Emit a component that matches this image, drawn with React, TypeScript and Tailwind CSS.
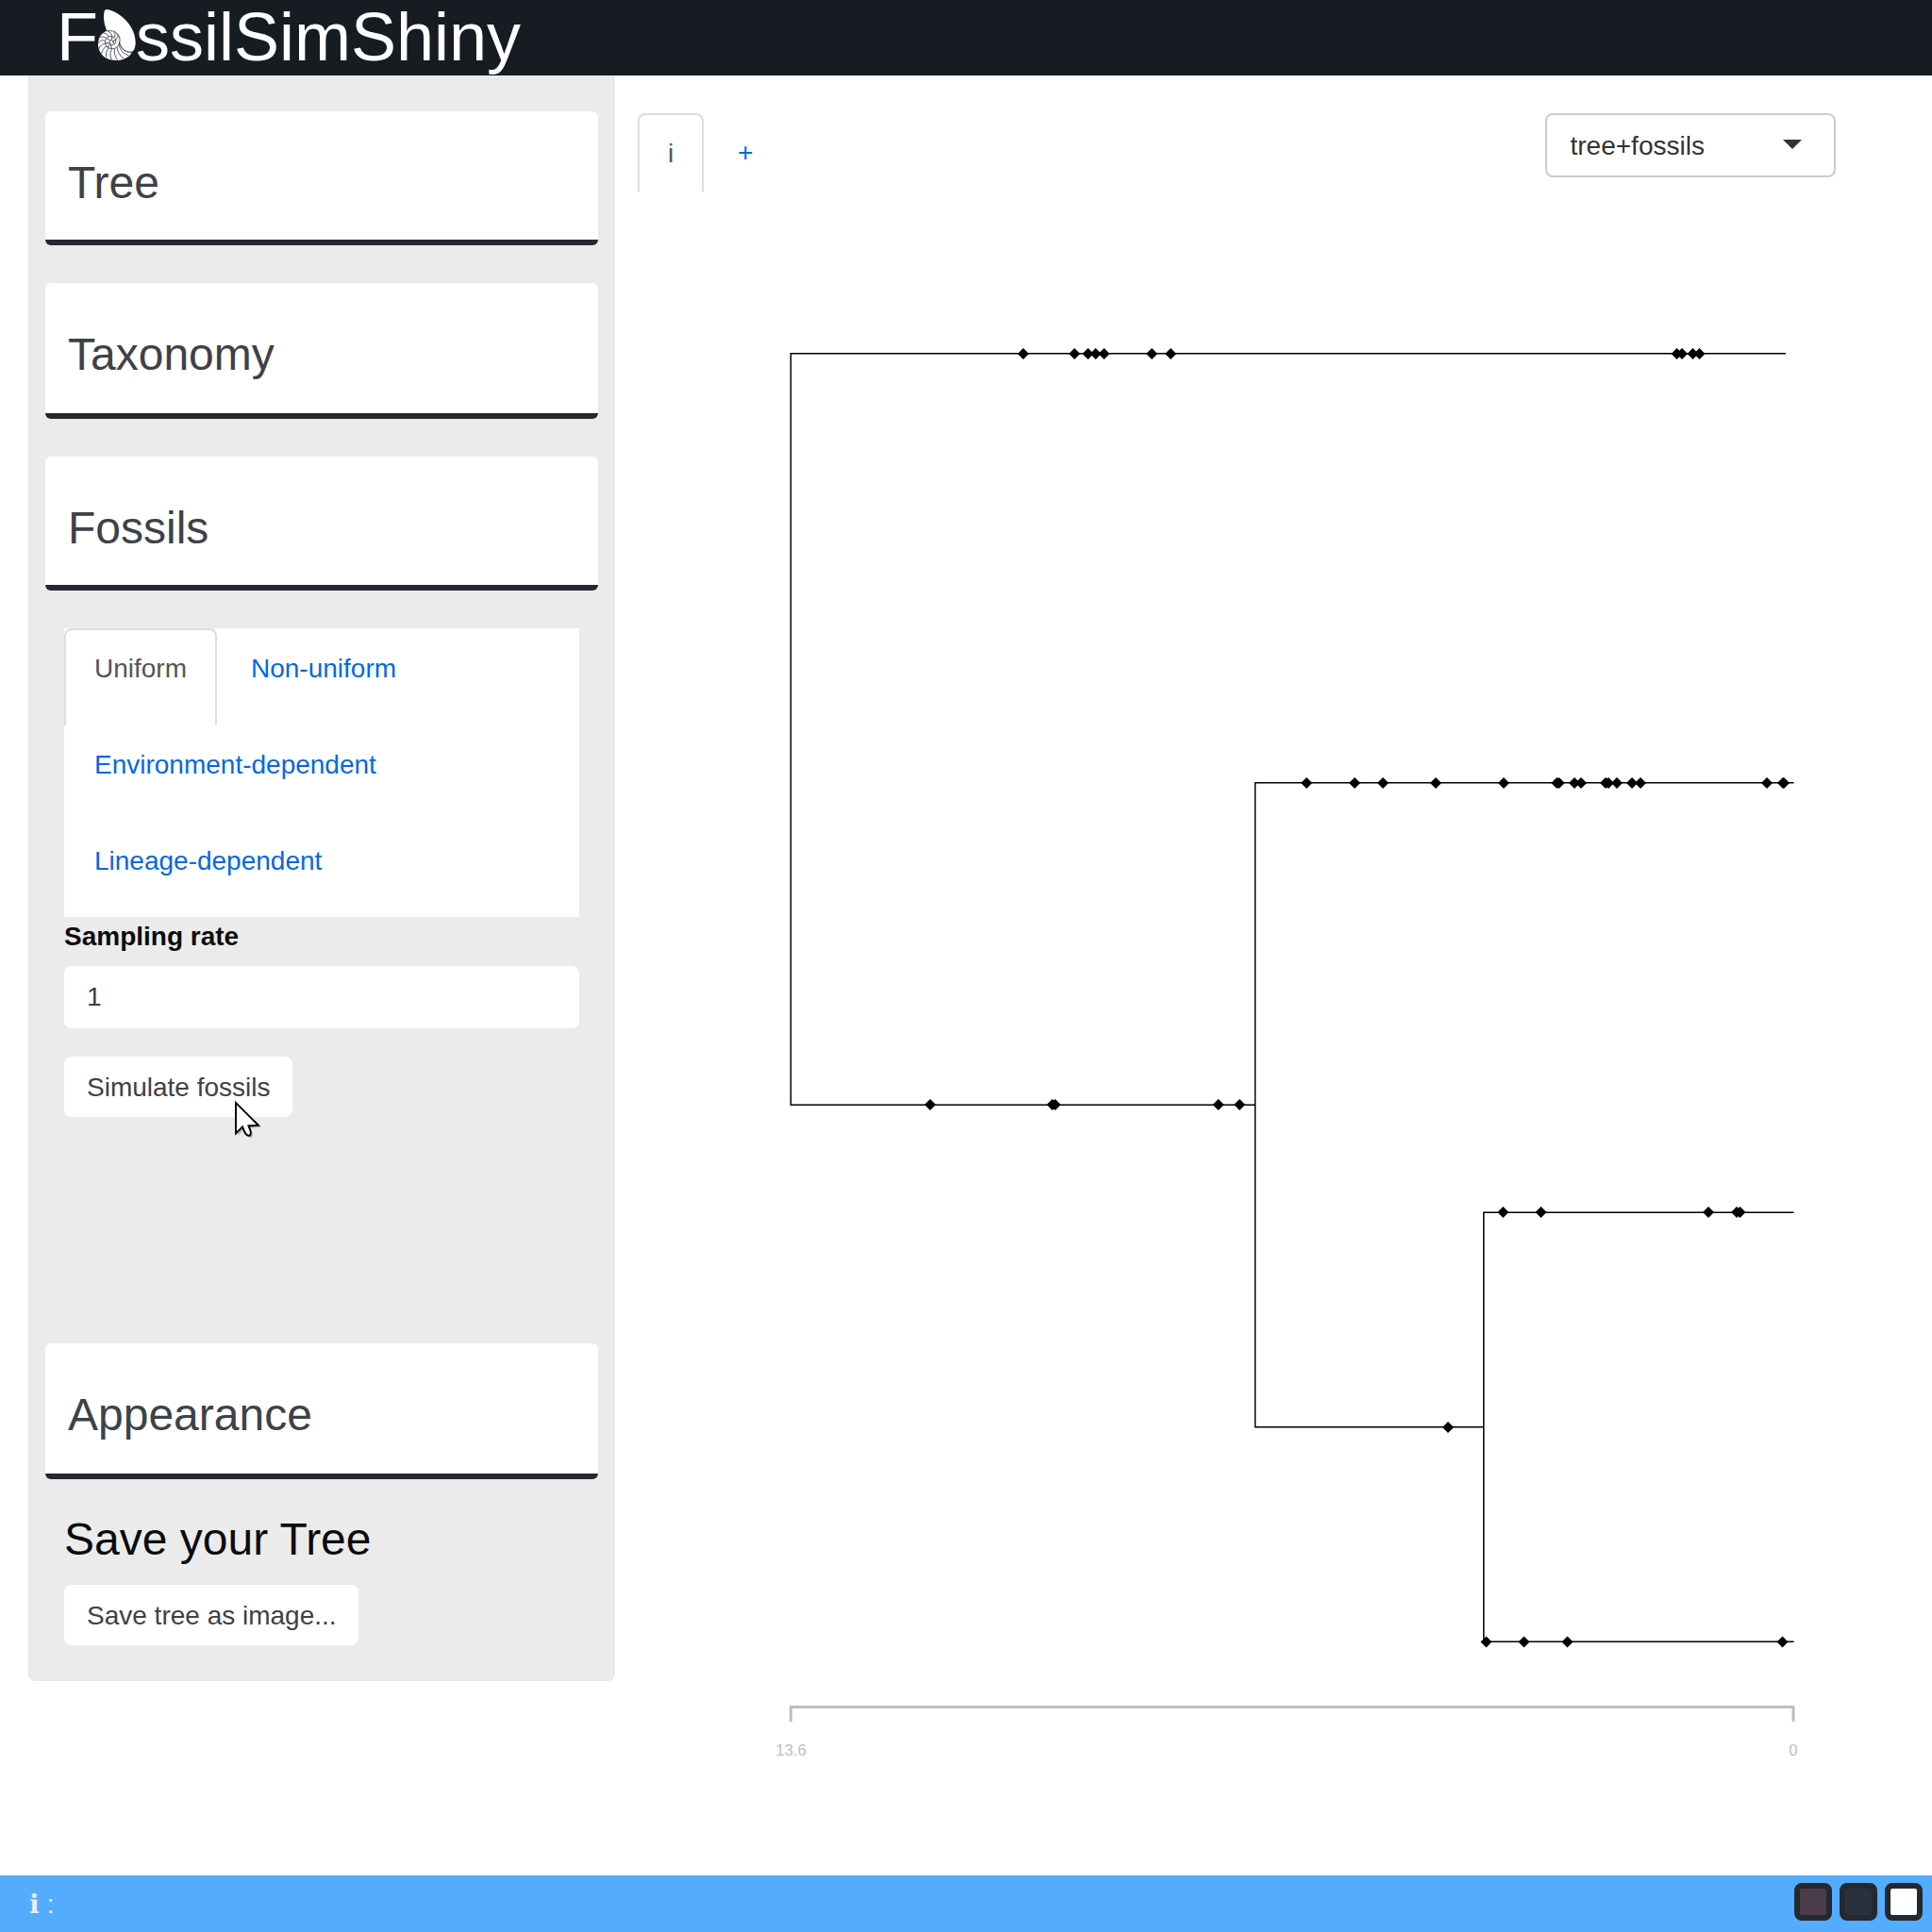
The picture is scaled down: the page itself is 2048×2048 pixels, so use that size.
import React from "react";

const diamonds: { y: number; xs: number[] }[] = [
  { y: 375, xs: [1084.7, 1139, 1153.3, 1161.5, 1170.3, 1221, 1241, 1777.5, 1783, 1794.5, 1801.5] },
  { y: 830, xs: [1385, 1436, 1466, 1522, 1594, 1650.3, 1652.7, 1669, 1676, 1702, 1705, 1714, 1730, 1739, 1873, 1890, 1891] },
  { y: 1171, xs: [986, 1115.5, 1118.5, 1291.5, 1314] },
  { y: 1285, xs: [1593.3, 1633.5, 1811, 1841, 1844.5] },
  { y: 1513, xs: [1535] },
  { y: 1740.4, xs: [1575.5, 1615.5, 1661.5, 1889.5] },
];

function Nautilus() {
  return (
    <svg className="mt-[10px] h-[55px] w-10 shrink-0" viewBox="0 0 120 165" fill="none">
      <path
        fill="#fff"
        d="M20 5C22-1 30-1 40 3C84 18 119 62 119 105C119 122 114 130 107 137C99 152 80 162 56 162C20 162 0 137 0 111C0 89 12 73 28 68C18 46 16 22 20 5Z"
      />
      <g stroke="#171b22" strokeWidth="2.2">
        <path strokeWidth="3" d="M114 134C92 141 72 128 67 103" />
        <path d="M28 69C54 63 71 80 69 101C67 117 56 126 43 125C28 123 21 113 23 100C25 89 35 84 44 86C54 88 58 96 56 104C54 112 46 115 40 111C34 107 36 98 43 98C49 98 50 104 45 106" />
        <path d="M66 112C70 130 82 143 97 146M60 120C62 136 70 149 82 156M53 125C50 138 54 151 62 161M43 127C37 138 38 151 44 160M34 123C26 131 24 142 26 152M27 117C18 121 12 132 11 141M23 109C14 109 5 117 2 127M22 100C14 96 5 99 0 108M26 92C20 85 10 86 6 90M34 88C31 79 24 75 17 76M43 86C44 79 38 72 31 69M51 89C56 83 55 76 50 72M56 96C62 92 65 85 62 79" />
        <path strokeWidth="2.4" d="M43 125L40 111M31 121L38 109M23 108L37 106M28 92L39 99M44 86L44 98M56 98L47 101M54 110L47 105" />
      </g>
    </svg>
  );
}

function Panel({ title, tall }: { title: string; tall?: boolean }) {
  return (
    <div
      className={
        "mx-4 rounded-md border-b-[6px] border-[#24292f] bg-white px-6 pt-[49px] text-5xl leading-[54px] text-[#3e4148] " +
        (tall ? "h-36" : "h-[142px]")
      }
    >
      {title}
    </div>
  );
}

function Plot() {
  return (
    <svg className="block h-[1785px] w-full" viewBox="652 203 1396 1785" fontFamily="Liberation Sans, sans-serif">
      <g stroke="#000" strokeWidth="1.5" fill="none">
        <path d="M1893 374.8H838.3V1171.2H1330.5" />
        <path d="M1901.5 829.8H1330.5V1512.8H1572.8" />
        <path d="M1901.5 1285.2H1572.8V1740.3H1901.5" />
      </g>
      {diamonds.map((row) =>
        row.xs.map((x) => <path key={`${row.y}-${x}`} d={`M${x - 6} ${row.y}l6-6 6 6-6 6z`} />)
      )}
      <path d="M838.3 1825V1809.5H1901V1825" stroke="#bebebe" strokeWidth="3" fill="none" />
      <g fill="#bebebe" fontSize="16.8" textAnchor="middle">
        <text x="838.5" y="1861">13.6</text>
        <text x="1901" y="1861">0</text>
      </g>
    </svg>
  );
}

export default function App() {
  return (
    <div className="relative flex h-[2048px] w-[2048px] flex-col overflow-hidden bg-white font-['Liberation_Sans',sans-serif] text-[28px] leading-8">
      <header className="flex h-20 shrink-0 bg-[#171b22] pl-[60px] text-[72px] leading-[80px] text-white">
        <span className="-mt-px">F</span>
        <Nautilus />
        <span className="-mt-px">ssilSimShiny</span>
      </header>

      <div className="flex h-[1908px] shrink-0">
        <aside className="ml-[30px] h-[1702px] w-[622px] shrink-0 rounded-b-lg border-2 border-t-0 border-[#e8e8e8] bg-[#ebebeb] pt-[38px]">
          <Panel title="Tree" />
          <div className="h-10" />
          <Panel title="Taxonomy" tall />
          <div className="h-10" />
          <Panel title="Fossils" />

          <div className="mx-9 mt-10 h-[758px]">
            <nav className="grid h-[306px] grid-rows-3 bg-white text-[#0568df]">
              <div className="flex gap-1">
                <span className="-mb-px w-[162px] rounded-t-lg border-2 border-b-0 border-[#ddd] px-[30px] pt-[25px] text-[#555]">Uniform</span>
                <span className="px-8 pt-[27px]">Non-uniform</span>
              </div>
              <span className="px-8 pt-[27px]">Environment-dependent</span>
              <span className="px-8 pt-[27px]">Lineage-dependent</span>
            </nav>
            <div className="pt-[5px] font-bold text-[#0b0c0d]">Sampling rate</div>
            <div className="mt-[15px] h-[66px] rounded-lg bg-white px-6 pt-[17px] text-[#3e4148]">1</div>
            <button className="mt-[30px] block h-16 w-[242px] whitespace-nowrap rounded-lg bg-white pl-6 pt-[2px] text-left text-[#3e4148]">Simulate fossils</button>
          </div>

          <Panel title="Appearance" tall />
          <h2 className="ml-9 mt-[37px] text-5xl leading-[54px] text-[#0b0c0d]">Save your Tree</h2>
          <button className="ml-9 mt-[21px] block h-16 w-[312px] whitespace-nowrap rounded-lg bg-white pl-6 pt-[2px] text-left text-[#3e4148]">Save tree as image...</button>
        </aside>

        <main className="w-[1396px]">
          <div className="flex h-[123px] items-start justify-between pl-6 pr-[102px] pt-10">
            <div className="flex h-[83px]">
              <span className="w-[70px] rounded-t-lg border-2 border-b-0 border-[#ddd] pt-[25px] text-center text-[#555]">i</span>
              <span className="pl-9 pt-[26px] text-[#0568df]">+</span>
            </div>
            <div className="flex h-[68px] w-[308px] items-center justify-between rounded-lg border-2 border-[#ccc] pl-[24.5px] pr-[34px] text-[#333]">
              <span className="pt-[2px]">tree+fossils</span>
              <svg className="mb-[3px] h-[10px] w-5" viewBox="0 0 20 10">
                <path d="M0 0H20L10 10Z" fill="#333" />
              </svg>
            </div>
          </div>
          <Plot />
        </main>
      </div>

      <footer className="flex h-[60px] shrink-0 items-center bg-[#54acff] pl-[31px] pr-[10px] text-[#ebebeb]">
        <span className="pt-[2px] font-['DejaVu_Sans',sans-serif]">ℹ</span>
        <span className="ml-2 pt-[2px]">:</span>
        <div className="mb-1 ml-auto flex gap-2">
          <span className="size-10 rounded-lg border-6 border-[#24292f] bg-[#4c3d4b]" />
          <span className="size-10 rounded-lg border-6 border-[#24292f] bg-[#29313d]" />
          <span className="size-10 rounded-lg border-6 border-[#24292f] bg-white" />
        </div>
      </footer>

      <svg className="absolute left-[248px] top-[1166px] h-[42px] w-8" viewBox="0 0 32 42">
        <path d="M4 5V38L11 31C13 35 14 40 18 40C21 39 20 35 17.500 29.500L28.500 29Z" fill="#000" opacity=".22" />
        <path d="M2 3V35.500L9 28.500C11 33 12 38 16 38C19 37 18 33 15.500 27.500L26 27Z" fill="#fff" stroke="#000" strokeWidth="1.900" />
      </svg>
    </div>
  );
}
